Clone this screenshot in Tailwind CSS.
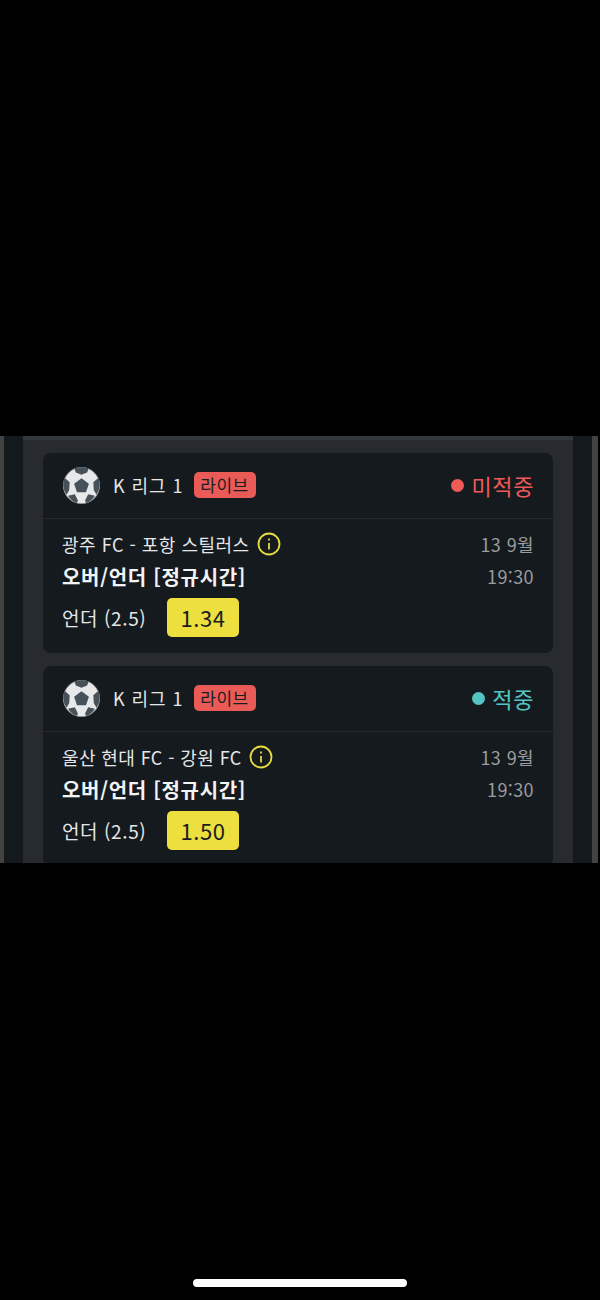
<!DOCTYPE html>
<html lang="ko">
<head>
  <meta charset="UTF-8">
  <title>Bet history</title>
  <script src="https://cdn.jsdelivr.net/npm/@tailwindcss/browser@4"></script>
</head>
<body class="bg-black">
  <div class="relative h-[1300px] w-[600px] overflow-hidden bg-black font-['Noto_Sans_CJK_KR','Noto_Sans',sans-serif]">
    <div class="h-[436px]"></div>

    <div class="flex h-[427px] w-[600px] overflow-hidden">
      <div class="w-[4px] bg-[#424340]"></div>
      <div class="w-[19px] bg-[#14191d]"></div>

      <div class="flex w-[550px] flex-col gap-[13px] border-t-[4px] border-[#33363a] bg-[#272a2f] px-[20px] pt-[13px]">
        <!-- card 1 -->
        <div class="h-[200px] shrink-0 rounded-[8px] bg-[#151a1e]">
          <div class="flex h-[66px] items-center border-b border-[#262a2e] pb-[1px] pl-[20px] pr-[19px]">
            <svg class="h-[37px] w-[37px]" viewBox="0 0 36 36">
              <circle cx="18" cy="18" r="17.600" fill="#e6e8ea" stroke="#9aa1a6" stroke-width=".8"/>
              <path d="M18 11l7.200 5.200-2.800 8.400h-8.800l-2.800-8.400z" fill="#46515a"/>
              <path d="M11 1.300Q18-.8 25 1.300l-1.500 4-5.500 2.200-5.500-2.200zM1.500 10.500l5 4.300-.5 7.700-2.700 4.500Q-1.500 19 1.500 10.500zM34.500 10.500l-5 4.300.5 7.700 2.700 4.500Q37.500 19 34.500 10.500zM5 28l6.500-1.500 3 6-1 2.500Q8 33.500 5 28zM31 28l-6.500-1.500-3 6 1 2.500Q28 33.500 31 28z" fill="#46515a"/>
            </svg>
            <span class="ml-[13px] text-[18px] leading-[26px] tracking-[0.95px] text-[#e4e6e8]">K 리그 1</span>
            <span class="ml-[10px] flex h-[26px] w-[62px] items-center justify-center rounded-[5px] bg-[#ea5a57] text-[17px] tracking-[0.5px] text-[#1a1d20]">라이브</span>
            <span class="ml-auto h-[13px] w-[13px] rounded-full bg-[#ef5a57]"></span>
            <span class="ml-[7px] text-[22px] leading-[30px] tracking-[0.6px] text-[#ef5a57]">미적중</span>
          </div>
          <div class="flex justify-between pl-[19px] pr-[19px] pt-[12px]">
            <div>
              <div class="flex h-[26px] items-center text-[#e4e6e8]">
                <span class="text-[18px] tracking-[0.5px]">광주 FC - 포항 스틸러스</span>
                <svg class="ml-[7px] h-[24px] w-[24px]" viewBox="0 0 24 24" fill="none" stroke="#e8dc3f" stroke-width="1.800"><circle cx="12" cy="12" r="10.500"/><path d="M12 11v6.500"/><path d="M12 6.500v2"/></svg>
              </div>
              <div class="mt-[7px] text-[20px] font-bold leading-[26px] tracking-[0.7px] text-[#f2f3f4]">오버/언더 [정규시간]</div>
              <div class="mt-[8px] flex items-center">
                <span class="w-[105px] pt-[2px] text-[19px] tracking-[0.6px] text-[#e4e6e8]">언더 (2.5)</span>
                <span class="flex h-[39px] w-[72px] items-center justify-center rounded-[5px] bg-[#eddf3e] text-[22px] tracking-[0.5px] text-[#1a1d20]">1.34</span>
              </div>
            </div>
            <div class="text-right text-[18px] tracking-[0.4px] text-[#9a9c9e]">
              <div class="h-[26px] leading-[26px]">13 9월</div>
              <div class="mt-[6px] leading-[26px]">19:30</div>
            </div>
          </div>
        </div>

        <!-- card 2 -->
        <div class="h-[200px] shrink-0 rounded-[8px] bg-[#151a1e]">
          <div class="flex h-[66px] items-center border-b border-[#262a2e] pb-[1px] pl-[20px] pr-[19px]">
            <svg class="h-[37px] w-[37px]" viewBox="0 0 36 36">
              <circle cx="18" cy="18" r="17.600" fill="#e6e8ea" stroke="#9aa1a6" stroke-width=".8"/>
              <path d="M18 11l7.200 5.200-2.800 8.400h-8.800l-2.800-8.400z" fill="#46515a"/>
              <path d="M11 1.300Q18-.8 25 1.300l-1.500 4-5.500 2.200-5.500-2.200zM1.500 10.500l5 4.300-.5 7.700-2.700 4.500Q-1.500 19 1.500 10.500zM34.500 10.500l-5 4.300.5 7.700 2.700 4.500Q37.500 19 34.500 10.500zM5 28l6.500-1.500 3 6-1 2.500Q8 33.500 5 28zM31 28l-6.500-1.500-3 6 1 2.500Q28 33.500 31 28z" fill="#46515a"/>
            </svg>
            <span class="ml-[13px] text-[18px] leading-[26px] tracking-[0.95px] text-[#e4e6e8]">K 리그 1</span>
            <span class="ml-[10px] flex h-[26px] w-[62px] items-center justify-center rounded-[5px] bg-[#ea5a57] text-[17px] tracking-[0.5px] text-[#1a1d20]">라이브</span>
            <span class="ml-auto h-[13px] w-[13px] rounded-full bg-[#55c5c3]"></span>
            <span class="ml-[7px] text-[22px] leading-[30px] tracking-[0.6px] text-[#55c5c3]">적중</span>
          </div>
          <div class="flex justify-between pl-[19px] pr-[19px] pt-[12px]">
            <div>
              <div class="flex h-[26px] items-center text-[#e4e6e8]">
                <span class="text-[18px] tracking-[0.4px]">울산 현대 FC - 강원 FC</span>
                <svg class="ml-[7px] h-[24px] w-[24px]" viewBox="0 0 24 24" fill="none" stroke="#e8dc3f" stroke-width="1.800"><circle cx="12" cy="12" r="10.500"/><path d="M12 11v6.500"/><path d="M12 6.500v2"/></svg>
              </div>
              <div class="mt-[7px] text-[20px] font-bold leading-[26px] tracking-[0.7px] text-[#f2f3f4]">오버/언더 [정규시간]</div>
              <div class="mt-[8px] flex items-center">
                <span class="w-[105px] pt-[2px] text-[19px] tracking-[0.6px] text-[#e4e6e8]">언더 (2.5)</span>
                <span class="flex h-[39px] w-[72px] items-center justify-center rounded-[5px] bg-[#eddf3e] text-[22px] tracking-[0.5px] text-[#1a1d20]">1.50</span>
              </div>
            </div>
            <div class="text-right text-[18px] tracking-[0.4px] text-[#9a9c9e]">
              <div class="h-[26px] leading-[26px]">13 9월</div>
              <div class="mt-[6px] leading-[26px]">19:30</div>
            </div>
          </div>
        </div>
      </div>

      <div class="w-[19px] bg-[#14191d]"></div>
      <div class="w-[6px] bg-[#424340]"></div>
    </div>

    <div class="absolute bottom-[13px] left-[193px] h-[8px] w-[214px] rounded-full bg-white"></div>
  </div>
</body>
</html>
